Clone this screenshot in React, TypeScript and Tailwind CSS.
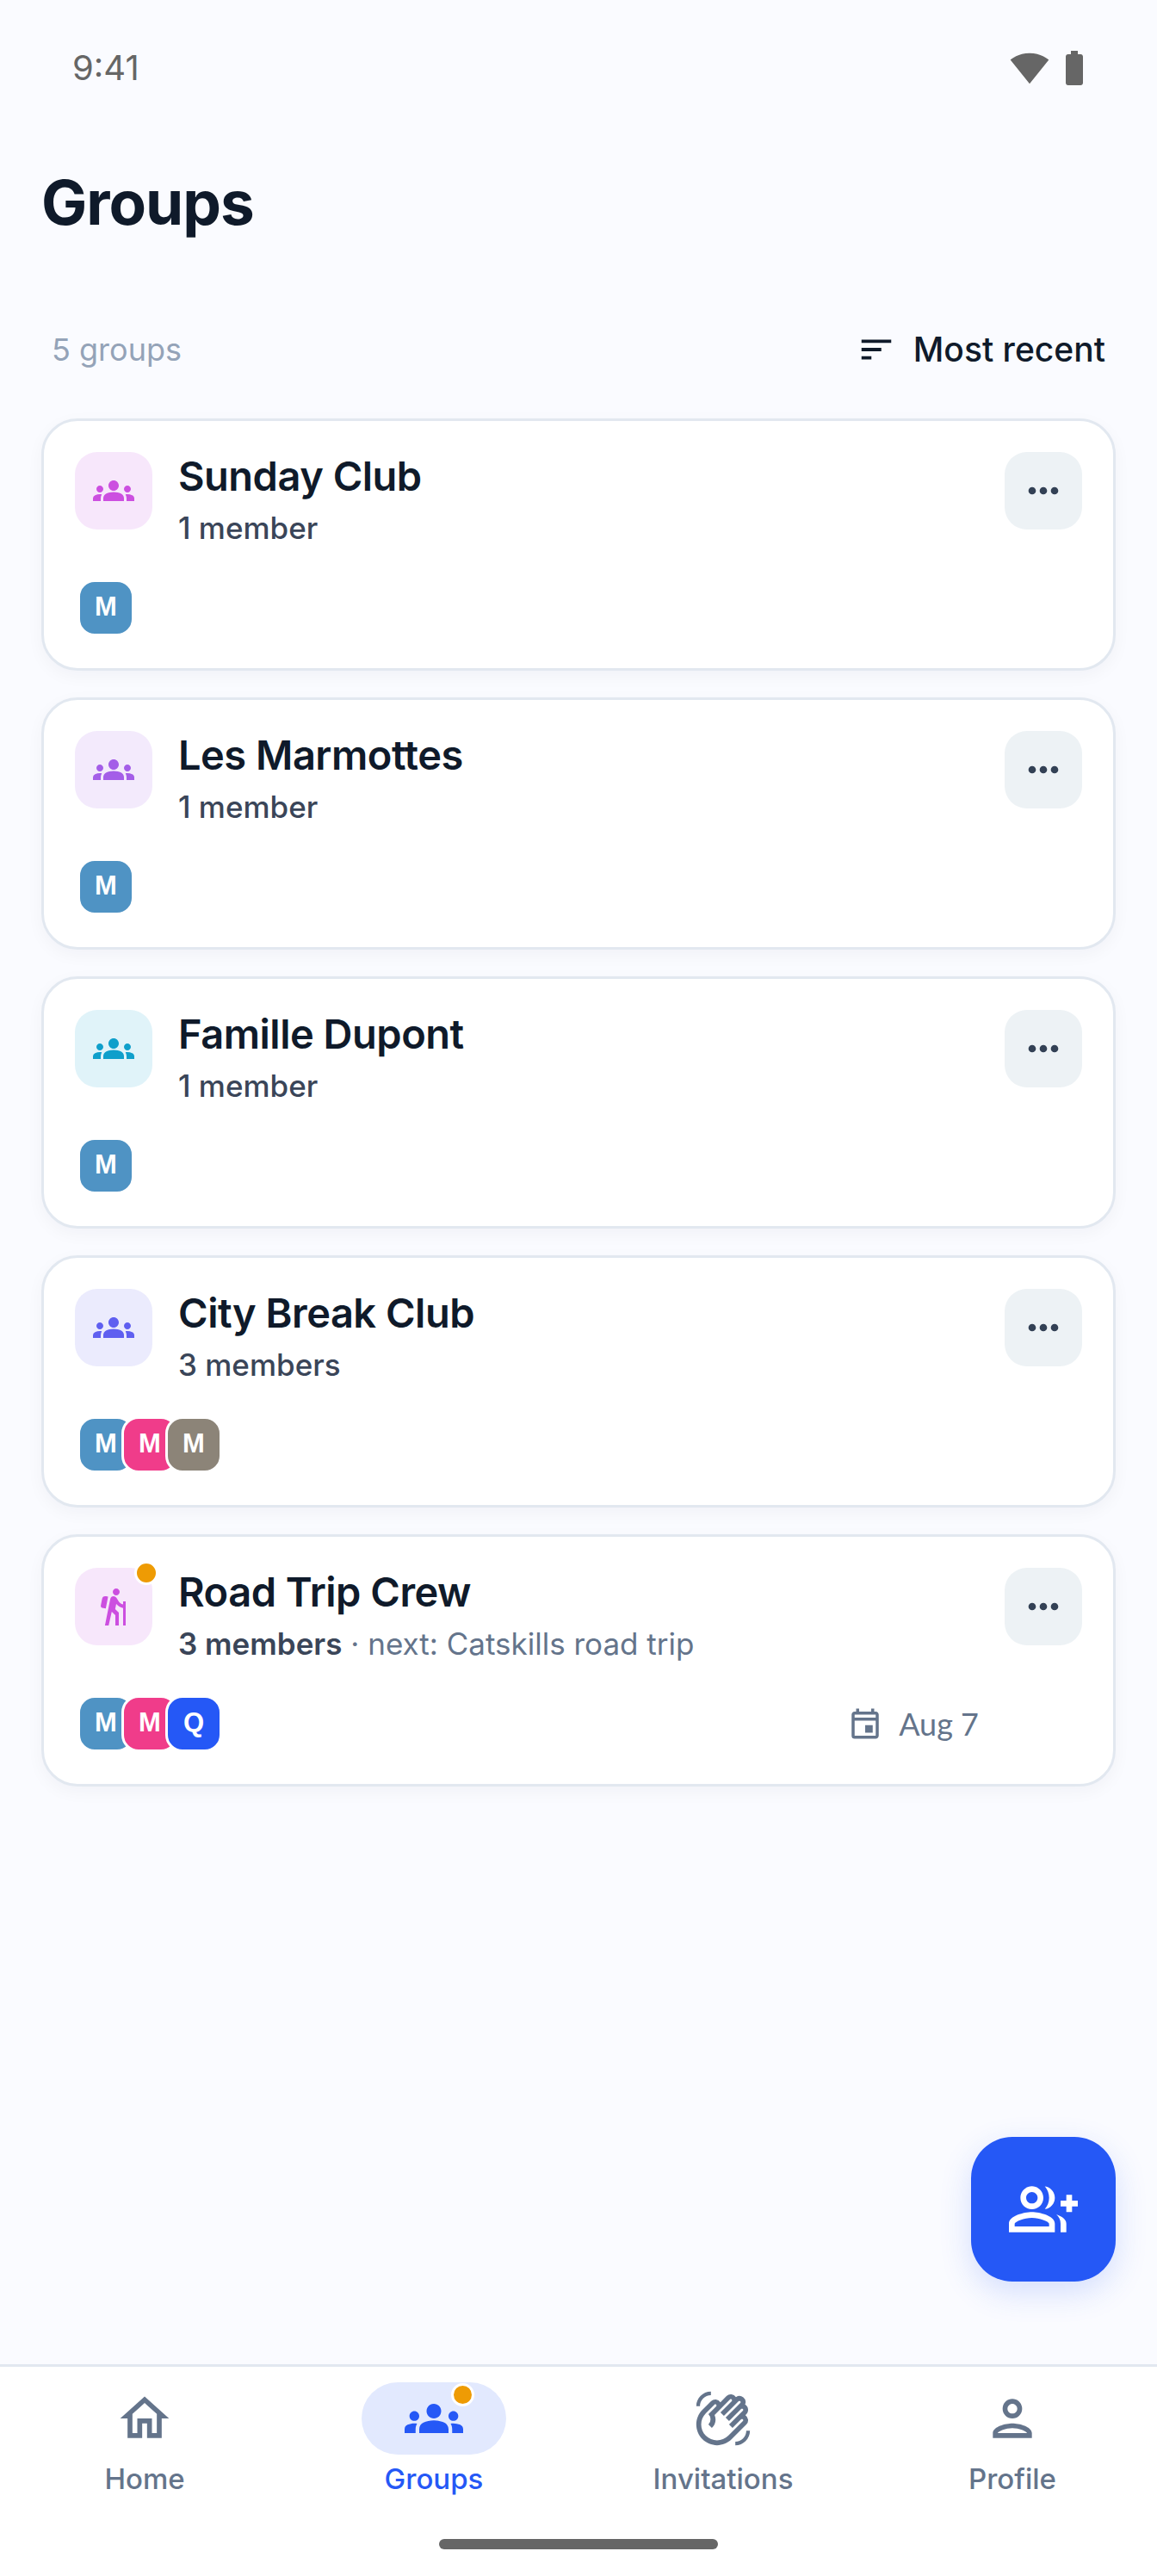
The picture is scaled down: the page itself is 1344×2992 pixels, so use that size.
import {
  MdBatteryFull,
  MdGroups,
  MdHiking,
  MdMoreHoriz,
  MdOutlineEvent,
  MdOutlineGroupAdd,
  MdOutlineHome,
  MdOutlinePerson,
  MdOutlineWavingHand,
  MdSignalWifi4Bar,
  MdSort,
} from 'react-icons/md'

type Avatar = { letter: string; color: string }
type Group = {
  name: string
  members: string
  next?: string
  date?: string
  tile: string
  tint: string
  hiking?: boolean
  avatars: Avatar[]
}

const blue = 'bg-[#4f93c4]'
const pink = 'bg-[#f03c8a]'
const taupe = 'bg-[#8c8478]'
const royal = 'bg-[#2558f6]'

const groups: Group[] = [
  { name: 'Sunday Club', members: '1 member', tile: 'bg-[#f7e7fb]', tint: 'text-[#cc4fe0]', avatars: [{ letter: 'M', color: blue }] },
  { name: 'Les Marmottes', members: '1 member', tile: 'bg-[#f3eafc]', tint: 'text-[#a45ee8]', avatars: [{ letter: 'M', color: blue }] },
  { name: 'Famille Dupont', members: '1 member', tile: 'bg-[#e0f3f9]', tint: 'text-[#0f9fcb]', avatars: [{ letter: 'M', color: blue }] },
  {
    name: 'City Break Club',
    members: '3 members',
    tile: 'bg-[#ebebfd]',
    tint: 'text-[#5f5ff0]',
    avatars: [
      { letter: 'M', color: blue },
      { letter: 'M', color: pink },
      { letter: 'M', color: taupe },
    ],
  },
  {
    name: 'Road Trip Crew',
    members: '3 members',
    next: 'next: Catskills road trip',
    date: 'Aug 7',
    tile: 'bg-[#f7e7fb]',
    tint: 'text-[#cc4fe0]',
    hiking: true,
    avatars: [
      { letter: 'M', color: blue },
      { letter: 'M', color: pink },
      { letter: 'Q', color: royal },
    ],
  },
]

function GroupCard({ group }: { group: Group }) {
  return (
    <div className="h-[293px] rounded-[42px] border-[3px] border-[#e2e8f0] bg-white p-[36px] shadow-[0_6px_20px_rgba(15,23,42,0.04)]">
      <div className="flex items-start">
        <div className={`relative flex h-[90px] w-[90px] shrink-0 items-center justify-center rounded-[26px] ${group.tile} ${group.tint}`}>
          {group.hiking ? <MdHiking size={48} /> : <MdGroups size={48} />}
          {group.hiking && (
            <span className="absolute right-[-7px] top-[-8px] h-[28px] w-[28px] rounded-full border-[3px] border-white bg-[#ee9b04]" />
          )}
        </div>
        <div className="ml-[30px] flex-1">
          <div className="text-[47px] font-semibold leading-[56px] tracking-[-0.5px] text-[#0f1a2a]">{group.name}</div>
          <div className="mt-[8px] text-[35px] leading-[48px] text-[#3a4558]">
            <span className={group.next ? 'font-semibold' : 'font-medium'}>{group.members}</span>
            {group.next && <span className="text-[#64748b]"> · {group.next}</span>}
          </div>
        </div>
        <div className="flex h-[90px] w-[90px] shrink-0 items-center justify-center rounded-[26px] bg-[#edf2f5] text-[#334155]">
          <MdMoreHoriz size={52} />
        </div>
      </div>
      <div className="mt-[36px] flex items-center pl-[3px]">
        {group.avatars.map((a, i) => (
          <div
            key={i}
            className={`flex h-[66px] w-[66px] shrink-0 items-center justify-center rounded-[20px] border-[3px] border-white font-['Liberation_Sans',sans-serif] text-[31px] font-bold text-white ${a.color} ${i > 0 ? 'ml-[-15px]' : ''}`}
          >
            {a.letter}
          </div>
        ))}
        {group.date && (
          <div className="ml-[auto] mr-[120px] flex items-center gap-[18px] text-[#64748b]">
            <MdOutlineEvent size={42} />
            <span className="font-['Lato',sans-serif] text-[36px]">{group.date}</span>
          </div>
        )}
      </div>
    </div>
  )
}

function NavItem({ label, active, children }: { label: string; active?: boolean; children: React.ReactNode }) {
  return (
    <div className={`flex w-[336px] flex-col items-center ${active ? 'text-[#2558f6]' : 'text-[#64748b]'}`}>
      <div className={`relative flex h-[84px] w-[168px] items-center justify-center rounded-full ${active ? 'bg-[#e2e9fe]' : ''}`}>
        {children}
        {active && (
          <span className="absolute right-[37px] top-[1px] h-[27px] w-[27px] rounded-full border-[3px] border-white bg-[#ee9b04]" />
        )}
      </div>
      <div className="mt-[8px] text-[33px] font-medium leading-[40px]">{label}</div>
    </div>
  )
}

export default function App() {
  return (
    <div className="relative flex h-[2992px] w-[1344px] flex-col overflow-hidden bg-[#fafbff] font-['Inter',sans-serif]">
      <div className="flex h-[158px] items-center justify-between pl-[84px] pr-[72px] text-[#666666]">
        <span className="text-[40px] leading-none">9:41</span>
        <div className="flex items-center gap-[5px]">
          <MdSignalWifi4Bar size={46} />
          <MdBatteryFull size={48} />
        </div>
      </div>

      <div className="flex-1 px-[48px]">
        <h1 className="mt-[37px] text-[71px] font-bold leading-[80px] tracking-[-1px] text-[#0f1a2a]">Groups</h1>
        <div className="mt-[102px] flex items-center justify-between pl-[12px] pr-[12px]">
          <span className="text-[36px] text-[#94a3b8]">5 groups</span>
          <div className="flex items-center gap-[20px] text-[#0f1a2a]">
            <MdSort size={46} />
            <span className="text-[39px] font-medium">Most recent</span>
          </div>
        </div>
        <div className="mt-[50px] flex flex-col gap-[31px]">
          {groups.map(g => (
            <GroupCard key={g.name} group={g} />
          ))}
        </div>
      </div>

      <button className="absolute bottom-[342px] right-[48px] flex h-[168px] w-[168px] items-center justify-center rounded-[48px] bg-[#2558f6] text-white shadow-[0_12px_36px_rgba(37,88,246,0.18)]">
        <MdOutlineGroupAdd size={80} />
      </button>

      <div className="relative h-[246px] border-t-[3px] border-[#e2e8f0] bg-white pt-[18px]">
        <div className="flex">
          <NavItem label="Home"><MdOutlineHome size={68} /></NavItem>
          <NavItem label="Groups" active><MdGroups size={68} /></NavItem>
          <NavItem label="Invitations"><MdOutlineWavingHand size={68} /></NavItem>
          <NavItem label="Profile"><MdOutlinePerson size={68} /></NavItem>
        </div>
        <div className="absolute bottom-[31px] left-[510px] h-[12px] w-[324px] rounded-full bg-[#666666]" />
      </div>
    </div>
  )
}
